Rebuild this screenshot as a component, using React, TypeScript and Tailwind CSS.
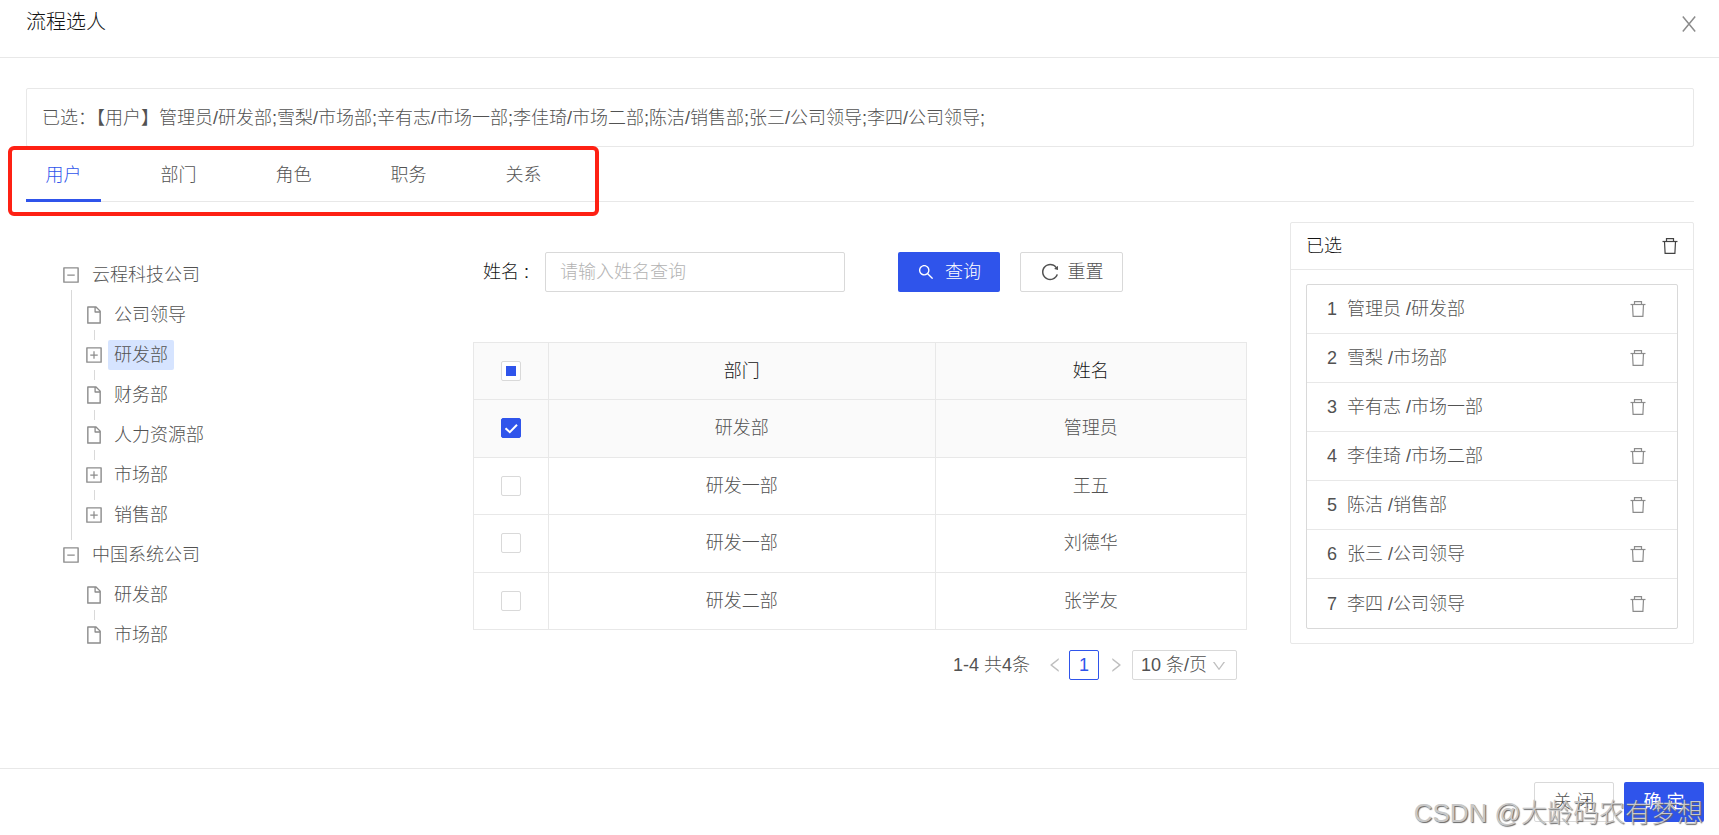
import React, { useState } from 'react';
import clsx from 'clsx';
import {
  AiOutlineDown,
  AiOutlineFile,
  AiOutlineLeft,
  AiOutlineMinusSquare,
  AiOutlinePlusSquare,
  AiOutlineReload,
  AiOutlineRight,
  AiOutlineSearch,
} from 'react-icons/ai';

interface TreeNode {
  key: string;
  title: string;
  expandable?: boolean;
}

interface Company extends TreeNode {
  children: TreeNode[];
}

interface User {
  id: number;
  dept: string;
  name: string;
}

const TABS = ['用户', '部门', '角色', '职务', '关系'];

const COMPANIES: Company[] = [
  {
    key: 'yc',
    title: '云程科技公司',
    children: [
      { key: 'yc-leader', title: '公司领导' },
      { key: 'yc-rd', title: '研发部', expandable: true },
      { key: 'yc-finance', title: '财务部' },
      { key: 'yc-hr', title: '人力资源部' },
      { key: 'yc-market', title: '市场部', expandable: true },
      { key: 'yc-sales', title: '销售部', expandable: true },
    ],
  },
  {
    key: 'zg',
    title: '中国系统公司',
    children: [
      { key: 'zg-rd', title: '研发部' },
      { key: 'zg-market', title: '市场部' },
    ],
  },
];

const USERS: User[] = [
  { id: 1, dept: '研发部', name: '管理员' },
  { id: 2, dept: '研发一部', name: '王五' },
  { id: 3, dept: '研发一部', name: '刘德华' },
  { id: 4, dept: '研发二部', name: '张学友' },
];

const SELECTED = [
  { name: '管理员', dept: '研发部' },
  { name: '雪梨', dept: '市场部' },
  { name: '辛有志', dept: '市场一部' },
  { name: '李佳琦', dept: '市场二部' },
  { name: '陈洁', dept: '销售部' },
  { name: '张三', dept: '公司领导' },
  { name: '李四', dept: '公司领导' },
];

const TrashIcon: React.FC<{ className?: string }> = ({ className }) => (
  <svg viewBox="0 0 16 16" fill="none" stroke="currentColor" strokeWidth="1.2" className={clsx('h-4 w-4', className)}>
    <path d="M0.5 3.5H15.5" />
    <path d="M4.5 3.5V0.6H11.5V3.5" />
    <path d="M2.5 3.5 3.1 15.4H12.9L13.5 3.5" />
  </svg>
);

interface CheckboxProps {
  label: string;
  checked: boolean;
  indeterminate?: boolean;
  onChange: () => void;
}

const Checkbox: React.FC<CheckboxProps> = ({ label, checked, indeterminate, onChange }) => (
  <span className="relative block mx-auto h-5 w-5">
    <input
      type="checkbox"
      aria-label={label}
      checked={checked}
      onChange={onChange}
      className="block h-5 w-5 cursor-pointer appearance-none rounded-xs border border-[#d9d9d9] bg-white checked:border-[#2f54eb] checked:bg-[#2f54eb]"
    />
    {checked && (
      <svg viewBox="0 0 20 20" className="pointer-events-none absolute inset-0 h-5 w-5">
        <path d="M4.5 10.2 8.8 14.2 16 6.8" fill="none" stroke="#fff" strokeWidth="2" />
      </svg>
    )}
    {indeterminate && !checked && (
      <span className="pointer-events-none absolute top-[5px] left-[5px] h-2.5 w-2.5 bg-[#2f54eb]" />
    )}
  </span>
);

const DeptTree: React.FC = () => {
  const [active, setActive] = useState('yc-rd');

  return (
    <ul className="pt-[38px] pl-[37px]">
      {COMPANIES.map((company, index) => (
        <li key={company.key}>
          <button type="button" className="flex h-[30px] items-center gap-[11px]">
            <AiOutlineMinusSquare className="-ml-0.5 h-5 w-5 text-[#8c8c8c]" />
            {company.title}
          </button>
          <ul
            className={clsx(
              'ml-2 border-l py-2.5 pl-3.5',
              index < COMPANIES.length - 1 ? 'border-[#d9d9d9]' : 'border-transparent'
            )}
          >
            {company.children.map((node, i) => (
              <li key={node.key}>
                {i > 0 && <div className="ml-2 h-2.5 w-px bg-[#d9d9d9]" />}
                <button
                  type="button"
                  onClick={() => setActive(node.key)}
                  className="flex h-[30px] items-center gap-1"
                >
                  {node.expandable ? (
                    <AiOutlinePlusSquare className="-ml-0.5 h-5 w-5 text-[#8c8c8c]" />
                  ) : (
                    <AiOutlineFile className="-ml-0.5 h-5 w-5 text-[#8c8c8c]" />
                  )}
                  <span
                    className={clsx(
                      'rounded-xs px-1.5 leading-[30px]',
                      active === node.key && 'bg-[#d6e4ff]'
                    )}
                  >
                    {node.title}
                  </span>
                </button>
              </li>
            ))}
          </ul>
        </li>
      ))}
    </ul>
  );
};

const UserTable: React.FC = () => {
  const [checkedIds, setCheckedIds] = useState<number[]>([1]);
  const allChecked = checkedIds.length === USERS.length;

  const toggle = (id: number) => {
    setCheckedIds(checkedIds.includes(id) ? checkedIds.filter((c) => c !== id) : [...checkedIds, id]);
  };

  return (
    <table className="h-72 w-full table-fixed border-collapse text-center [&_td]:border [&_td]:border-[#e8e8e8] [&_th]:border [&_th]:border-[#e8e8e8]">
      <thead>
        <tr className="h-[57px] bg-[#fafafa] text-[#141414]">
          <th className="w-[75px]">
            <Checkbox
              label="全选"
              checked={allChecked}
              indeterminate={checkedIds.length > 0}
              onChange={() => setCheckedIds(allChecked ? [] : USERS.map((u) => u.id))}
            />
          </th>
          <th className="w-1/2 font-light">部门</th>
          <th className="font-light">姓名</th>
        </tr>
      </thead>
      <tbody>
        {USERS.map((user) => {
          const checked = checkedIds.includes(user.id);
          return (
            <tr key={user.id} className={clsx(checked && 'bg-[#fafafa]')}>
              <td>
                <Checkbox label={user.name} checked={checked} onChange={() => toggle(user.id)} />
              </td>
              <td>{user.dept}</td>
              <td>{user.name}</td>
            </tr>
          );
        })}
      </tbody>
    </table>
  );
};

const SelectedPanel: React.FC = () => (
  <section className="rounded-xs border border-[#e8e8e8]">
    <div className="flex h-[47px] items-center justify-between border-b border-[#e8e8e8] px-[15px]">
      <h2 className="text-[#141414]">已选</h2>
      <button type="button" aria-label="清空">
        <TrashIcon className="text-[#434343]" />
      </button>
    </div>
    <div className="px-[15px] py-3.5">
      <ul className="rounded-xs border border-[#d9d9d9]">
        {SELECTED.map((item, index) => (
          <li
            key={item.name}
            className="flex h-[49px] items-center border-b border-[#e8e8e8] pr-[31px] pl-5 last:border-b-0"
          >
            <span className="w-5">{index + 1}</span>
            <span className="flex-1">
              {item.name} /{item.dept}
            </span>
            <button type="button" aria-label={`删除${item.name}`}>
              <TrashIcon className="text-[#8c8c8c]" />
            </button>
          </li>
        ))}
      </ul>
    </div>
  </section>
);

export default function App() {
  const [tab, setTab] = useState('用户');
  const [keyword, setKeyword] = useState('');

  return (
    <div className="relative flex min-h-screen flex-col bg-white font-['Liberation_Sans','Noto_Sans_CJK_SC',sans-serif] text-lg font-light text-[#525252]">
      <header className="flex h-[58px] items-start justify-between border-b border-[#e8e8e8] pt-2 pr-[23px] pl-[26px]">
        <h1 className="text-xl text-[#141414]">流程选人</h1>
        <button type="button" aria-label="关闭窗口" className="pt-2">
          <svg viewBox="0 0 14 16" className="h-4 w-3.5">
            <path d="M0.8 0.5 13.2 15.5M13.2 0.5 0.8 15.5" fill="none" stroke="#8c8c8c" strokeWidth="1.5" />
          </svg>
        </button>
      </header>

      <main className="flex-1 pt-[30px] pr-[25px] pl-[26px]">
        <div className="flex h-[59px] items-center rounded-xs border border-[#e8e8e8] px-[15px]">
          已选：【用户】{SELECTED.map((s) => `${s.name}/${s.dept};`).join('')}
        </div>

        {/* Tab bar */}
        <div className="relative">
          <nav role="tablist" className="flex h-[55px] gap-10 border-b border-[#e8e8e8]">
            {TABS.map((name) => (
              <button
                key={name}
                type="button"
                role="tab"
                aria-selected={tab === name}
                onClick={() => setTab(name)}
                className={clsx(
                  '-mb-px w-[75px] border-b-3 pt-1',
                  tab === name ? 'border-[#2f54eb] text-[#2f54eb]' : 'border-transparent'
                )}
              >
                {name}
              </button>
            ))}
          </nav>
          <div className="pointer-events-none absolute -top-px -left-[18px] h-[70px] w-[591px] rounded-md border-4 border-[#fe2114]" />
        </div>

        <div className="grid grid-cols-[447fr_817fr_404fr] items-start pt-5">
          <DeptTree />

          <div className="pt-[30px] pr-[43px]">
            <form className="flex items-center pl-2.5" onSubmit={(e) => e.preventDefault()}>
              <label htmlFor="keyword" className="w-[62px] text-[#141414]">
                姓名 :
              </label>
              <input
                id="keyword"
                value={keyword}
                onChange={(e) => setKeyword(e.target.value)}
                placeholder="请输入姓名查询"
                className="h-10 w-[300px] rounded-xs border border-[#d9d9d9] px-3.5 outline-none placeholder:text-[#b3b3b3]"
              />
              <button
                type="submit"
                className="ml-[53px] flex h-10 w-[102px] items-center justify-center gap-2.5 rounded-xs bg-[#2f54eb] text-white"
              >
                <AiOutlineSearch className="h-[18px] w-[18px]" />
                查询
              </button>
              <button
                type="button"
                onClick={() => setKeyword('')}
                className="ml-5 flex h-10 w-[103px] items-center justify-center gap-2 rounded-xs border border-[#d9d9d9]"
              >
                <AiOutlineReload className="h-5 w-5" />
                重置
              </button>
            </form>

            <div className="pt-[50px]">
              <UserTable />
            </div>

            <div className="flex items-center justify-end pt-5 pr-2.5">
              <span>1-4 共4条</span>
              <button type="button" aria-label="上一页" className="flex w-[39px] justify-center pl-2.5 text-[#bfbfbf]">
                <AiOutlineLeft className="h-[18px] w-[18px]" />
              </button>
              <button
                type="button"
                className="h-[30px] w-[30px] rounded-xs border border-[#2f54eb] leading-7 text-[#2f54eb]"
              >
                1
              </button>
              <button type="button" aria-label="下一页" className="flex w-[33px] justify-center text-[#bfbfbf]">
                <AiOutlineRight className="h-[18px] w-[18px]" />
              </button>
              <div className="relative">
                <select
                  aria-label="每页条数"
                  className="block h-[30px] w-[105px] appearance-none rounded-xs border border-[#d9d9d9] bg-white pl-2 leading-7 outline-none"
                >
                  <option>10 条/页</option>
                  <option>20 条/页</option>
                </select>
                <AiOutlineDown className="pointer-events-none absolute top-2 right-2.5 h-4 w-4 text-[#bfbfbf]" />
              </div>
            </div>
          </div>

          <SelectedPanel />
        </div>
      </main>

      <footer className="flex h-[67px] justify-end gap-2.5 border-t border-[#e8e8e8] pt-[13px] pr-[15px]">
        <button type="button" className="h-10 w-20 rounded-xs border border-[#d9d9d9]">
          关 闭
        </button>
        <button type="button" className="h-10 w-20 rounded-xs bg-[#2f54eb] font-normal text-white">
          确 定
        </button>
      </footer>

      <div className="pointer-events-none absolute right-4 bottom-1 text-[26px] leading-9 text-[#c8c8c8] [text-shadow:1px_1px_1px_#666]">
        CSDN @大龄码农有梦想
      </div>
    </div>
  );
}
